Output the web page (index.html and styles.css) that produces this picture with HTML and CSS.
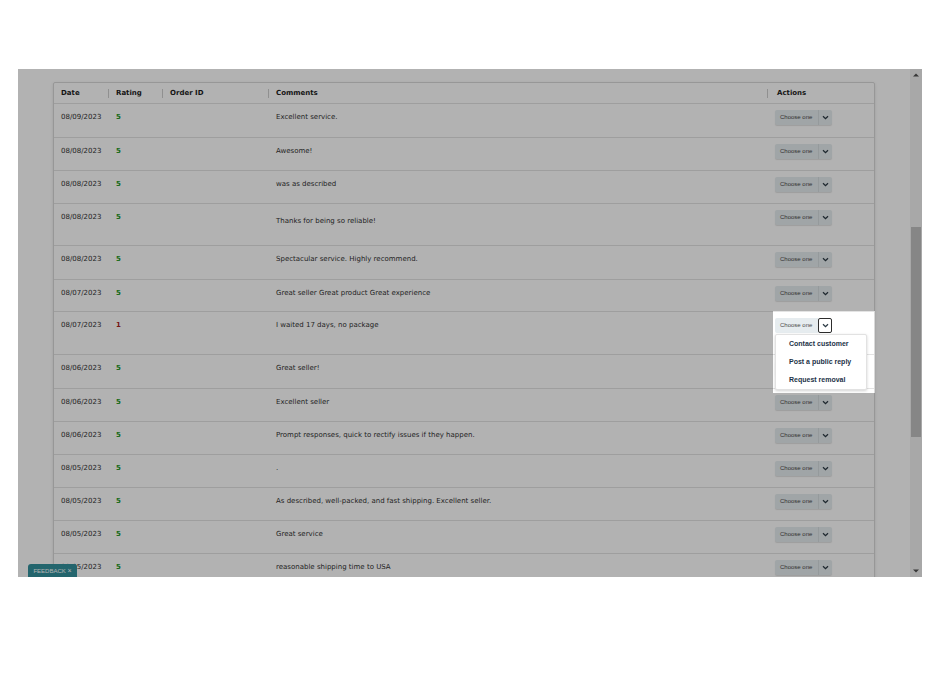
FILE: index.html
```html
<!DOCTYPE html>
<html lang="en">
<head>
<meta charset="utf-8">
<title>Feedback manager</title>
<link rel="stylesheet" href="styles.css">
</head>
<body>
<div class="frame">
  <div class="viewport">
    <div class="card">
      <div class="row head">
        <div class="hc first">Date</div>
        <div class="hc">Rating</div>
        <div class="hc">Order ID</div>
        <div class="hc">Comments</div>
        <div class="hc act">Actions</div>
      </div>

      <div class="row h34">
        <div class="c date">08/09/2023</div><div class="c rate">5</div><div class="c"></div>
        <div class="c">Excellent service.</div>
        <div class="c action"><div class="choose"><span class="lbl">Choose one</span><span class="chev"><svg viewBox="0 0 7 5" width="7" height="5"><path d="M1 1.2 3.5 3.6 6 1.2"/></svg></span></div></div>
      </div>
      <div class="row">
        <div class="c date">08/08/2023</div><div class="c rate">5</div><div class="c"></div>
        <div class="c">Awesome!</div>
        <div class="c action"><div class="choose"><span class="lbl">Choose one</span><span class="chev"><svg viewBox="0 0 7 5" width="7" height="5"><path d="M1 1.2 3.5 3.6 6 1.2"/></svg></span></div></div>
      </div>
      <div class="row">
        <div class="c date">08/08/2023</div><div class="c rate">5</div><div class="c"></div>
        <div class="c">was as described</div>
        <div class="c action"><div class="choose"><span class="lbl">Choose one</span><span class="chev"><svg viewBox="0 0 7 5" width="7" height="5"><path d="M1 1.2 3.5 3.6 6 1.2"/></svg></span></div></div>
      </div>
      <div class="row h42">
        <div class="c date">08/08/2023</div><div class="c rate">5</div><div class="c"></div>
        <div class="c low">Thanks for being so reliable!</div>
        <div class="c action"><div class="choose"><span class="lbl">Choose one</span><span class="chev"><svg viewBox="0 0 7 5" width="7" height="5"><path d="M1 1.2 3.5 3.6 6 1.2"/></svg></span></div></div>
      </div>
      <div class="row h34">
        <div class="c date">08/08/2023</div><div class="c rate">5</div><div class="c"></div>
        <div class="c">Spectacular service. Highly recommend.</div>
        <div class="c action"><div class="choose"><span class="lbl">Choose one</span><span class="chev"><svg viewBox="0 0 7 5" width="7" height="5"><path d="M1 1.2 3.5 3.6 6 1.2"/></svg></span></div></div>
      </div>
      <div class="row h32">
        <div class="c date">08/07/2023</div><div class="c rate">5</div><div class="c"></div>
        <div class="c">Great seller Great product Great experience</div>
        <div class="c action"><div class="choose"><span class="lbl">Choose one</span><span class="chev"><svg viewBox="0 0 7 5" width="7" height="5"><path d="M1 1.2 3.5 3.6 6 1.2"/></svg></span></div></div>
      </div>
      <div class="row h43">
        <div class="c date">08/07/2023</div><div class="c rate bad">1</div><div class="c"></div>
        <div class="c">I waited 17 days, no package</div>
        <div class="c action open">
          <div class="choose"><span class="lbl">Choose one</span><span class="chev focus"><svg viewBox="0 0 7 5" width="7" height="5"><path d="M1 1.2 3.5 3.6 6 1.2"/></svg></span></div>
          <ul class="menu">
            <li>Contact customer</li>
            <li>Post a public reply</li>
            <li>Request removal</li>
          </ul>
        </div>
      </div>
      <div class="row h34">
        <div class="c date">08/06/2023</div><div class="c rate">5</div><div class="c"></div>
        <div class="c">Great seller!</div>
        <div class="c action"><div class="choose"><span class="lbl">Choose one</span><span class="chev"><svg viewBox="0 0 7 5" width="7" height="5"><path d="M1 1.2 3.5 3.6 6 1.2"/></svg></span></div></div>
      </div>
      <div class="row">
        <div class="c date">08/06/2023</div><div class="c rate">5</div><div class="c"></div>
        <div class="c">Excellent seller</div>
        <div class="c action"><div class="choose"><span class="lbl">Choose one</span><span class="chev"><svg viewBox="0 0 7 5" width="7" height="5"><path d="M1 1.2 3.5 3.6 6 1.2"/></svg></span></div></div>
      </div>
      <div class="row">
        <div class="c date">08/06/2023</div><div class="c rate">5</div><div class="c"></div>
        <div class="c">Prompt responses, quick to rectify issues if they happen.</div>
        <div class="c action"><div class="choose"><span class="lbl">Choose one</span><span class="chev"><svg viewBox="0 0 7 5" width="7" height="5"><path d="M1 1.2 3.5 3.6 6 1.2"/></svg></span></div></div>
      </div>
      <div class="row">
        <div class="c date">08/05/2023</div><div class="c rate">5</div><div class="c"></div>
        <div class="c">.</div>
        <div class="c action"><div class="choose"><span class="lbl">Choose one</span><span class="chev"><svg viewBox="0 0 7 5" width="7" height="5"><path d="M1 1.2 3.5 3.6 6 1.2"/></svg></span></div></div>
      </div>
      <div class="row">
        <div class="c date">08/05/2023</div><div class="c rate">5</div><div class="c"></div>
        <div class="c">As described, well-packed, and fast shipping. Excellent seller.</div>
        <div class="c action"><div class="choose"><span class="lbl">Choose one</span><span class="chev"><svg viewBox="0 0 7 5" width="7" height="5"><path d="M1 1.2 3.5 3.6 6 1.2"/></svg></span></div></div>
      </div>
      <div class="row">
        <div class="c date">08/05/2023</div><div class="c rate">5</div><div class="c"></div>
        <div class="c">Great service</div>
        <div class="c action"><div class="choose"><span class="lbl">Choose one</span><span class="chev"><svg viewBox="0 0 7 5" width="7" height="5"><path d="M1 1.2 3.5 3.6 6 1.2"/></svg></span></div></div>
      </div>
      <div class="row">
        <div class="c date">08/05/2023</div><div class="c rate">5</div><div class="c"></div>
        <div class="c">reasonable shipping time to USA</div>
        <div class="c action"><div class="choose"><span class="lbl">Choose one</span><span class="chev"><svg viewBox="0 0 7 5" width="7" height="5"><path d="M1 1.2 3.5 3.6 6 1.2"/></svg></span></div></div>
      </div>
    </div>
  </div>

  <div class="scrollbar">
    <div class="sb-btn"><svg viewBox="0 0 6 4" width="6" height="4"><path d="M0 3.5 3 0.5 6 3.5z"/></svg></div>
    <div class="sb-track"><div class="sb-thumb"></div></div>
    <div class="sb-btn"><svg viewBox="0 0 6 4" width="6" height="4"><path d="M0 0.5 3 3.5 6 0.5z"/></svg></div>
  </div>

  <div class="feedback">FEEDBACK <span class="x">×</span></div>
  <div class="spotlight"></div>
</div>
</body>
</html>
```

FILE: styles.css
```css
* { box-sizing: border-box; }

html, body {
  margin: 0;
  padding: 0;
  background: #ffffff;
}

body {
  padding: 69px 0 0 18px;
  font-family: "DejaVu Sans", Verdana, sans-serif;
}

.frame {
  position: relative;
  width: 904px;
  height: 508px;
  overflow: hidden;
  display: flex;
  background: #ffffff;
}

.viewport {
  flex: 1;
  overflow: hidden;
  padding: 13px 35px 0 35px;
}

.card {
  border: 1px solid #d9d9d9;
  border-radius: 2px;
  box-shadow: 0 1px 3px rgba(0, 0, 0, 0.12);
  background: #ffffff;
  min-height: 520px;
}

.row {
  display: grid;
  grid-template-columns: 54px 54px 106px 499px 1fr;
  height: 33px;
  border-top: 1px solid #e3e3e3;
  font-size: 7px;
  line-height: 8px;
  color: #333333;
}

.row.head {
  height: 20px;
  border-top: 0;
  align-items: center;
}
.row.h34 { height: 34px; }
.row.h32 { height: 32px; }
.row.h42 { height: 42px; }
.row.h43 { height: 43px; }

.hc {
  font-weight: bold;
  color: #1e1e1e;
  padding-left: 8px;
  height: 20px;
  line-height: 20px;
  background: linear-gradient(#cfcfcf, #cfcfcf) no-repeat left center / 1px 9px;
}
.hc.first { background: none; padding-left: 7px; }
.hc.act { padding-left: 10px; }

.c {
  padding: 9px 0 0 8px;
  white-space: nowrap;
}
.c.date { padding-left: 7px; }
.c.low { padding-top: 13px; }

.rate {
  color: #239623;
  font-weight: bold;
}
.rate.bad { color: #a82222; }

.action {
  position: relative;
  padding-top: 6px;
}

.choose {
  display: inline-flex;
  height: 15px;
  background: #e6ecef;
  border-radius: 2px;
  box-shadow: 0 1px 1px rgba(0, 0, 0, 0.12);
  font-family: "Liberation Sans", Arial, sans-serif;
}
.choose .lbl {
  width: 43px;
  padding-left: 5px;
  font-size: 6px;
  line-height: 15px;
  color: #4a4a4a;
}
.choose .chev {
  width: 14px;
  border-left: 1px solid #d6dde0;
  display: flex;
  align-items: center;
  justify-content: center;
}
.chev svg path {
  fill: none;
  stroke: #2b3a44;
  stroke-width: 1.3;
}
.chev.focus {
  background: #ffffff;
  border: 1px solid #2d2d2d;
  border-radius: 2px;
  box-shadow: none;
}
.action.open .choose { box-shadow: none; }

.menu {
  position: absolute;
  z-index: 2;
  left: 8px;
  top: 22px;
  width: 92px;
  margin: 0;
  padding: 0;
  list-style: none;
  background: #ffffff;
  border: 1px solid #e2e2e2;
  border-radius: 2px;
  box-shadow: 0 1px 3px rgba(0, 0, 0, 0.18);
  font-family: "Liberation Sans", Arial, sans-serif;
  font-size: 7px;
  font-weight: bold;
  color: #1c3247;
}
.menu li {
  height: 18px;
  line-height: 18px;
  padding-left: 13px;
}

.scrollbar {
  width: 12px;
  flex: none;
  display: flex;
  flex-direction: column;
  background: #f1f1f1;
}
.sb-btn {
  height: 12px;
  display: flex;
  align-items: center;
  justify-content: center;
}
.sb-btn svg path { fill: #505050; }
.sb-track {
  flex: 1;
  padding: 146px 1px 0 1px;
}
.sb-thumb {
  height: 210px;
  background: #c1c1c1;
}

.feedback {
  position: absolute;
  z-index: 3;
  left: 10px;
  bottom: 0;
  width: 49px;
  height: 13px;
  background: #33919d;
  border-radius: 3px 3px 0 0;
  color: #ffffff;
  font-family: "Liberation Sans", Arial, sans-serif;
  font-size: 6px;
  line-height: 13px;
  text-align: center;
}
.feedback .x { font-size: 7px; }

.spotlight {
  position: absolute;
  z-index: 5;
  left: 755px;
  top: 242px;
  width: 102px;
  height: 82px;
  box-shadow: 0 0 0 2000px rgba(0, 0, 0, 0.3);
  pointer-events: none;
}
```
